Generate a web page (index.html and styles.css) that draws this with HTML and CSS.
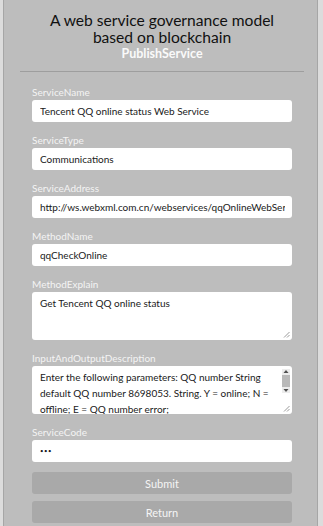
FILE: index.html
```html
<!DOCTYPE html>
<html>
<head>
<meta charset="utf-8">
<link rel="stylesheet" href="styles.css">
</head>
<body>
<div class="panel">
  <header class="head">
    <h1 class="title">A web service governance model<br>based on blockchain</h1>
    <div class="subtitle">PublishService</div>
  </header>
  <hr class="rule">
  <form class="form">
    <div class="field">
      <label class="label">ServiceName</label>
      <div class="input"><span class="val">Tencent QQ online status Web Service</span></div>
    </div>
    <div class="field">
      <label class="label">ServiceType</label>
      <div class="input"><span class="val">Communications</span></div>
    </div>
    <div class="field">
      <label class="label">ServiceAddress</label>
      <div class="input"><span class="val">http://ws.webxml.com.cn/webservices/qqOnlineWebService.asmx</span></div>
    </div>
    <div class="field">
      <label class="label">MethodName</label>
      <div class="input"><span class="val">qqCheckOnline</span></div>
    </div>
    <div class="field">
      <label class="label">MethodExplain</label>
      <div class="area">
        <div class="area-text">Get Tencent QQ online status</div>
        <div class="area-side">
          <svg class="grip" width="7" height="7" viewBox="0 0 7 7"><path d="M6.5 1 L1 6.5 M6.5 4 L4 6.5" stroke="#9a9a9a" stroke-width="1" fill="none"/></svg>
        </div>
      </div>
    </div>
    <div class="field">
      <label class="label">InputAndOutputDescription</label>
      <div class="area">
        <div class="area-text">Enter the following parameters: QQ number String default QQ number 8698053. String. Y = online; N = offline; E = QQ number error;</div>
        <div class="area-side scroll">
          <div class="sb">
            <svg class="arrow" width="8" height="5" viewBox="0 0 8 5"><path d="M4 1 L6.5 4 L1.5 4 Z" fill="#505050"/></svg>
            <span class="thumb"></span>
            <svg class="arrow" width="8" height="5" viewBox="0 0 8 5"><path d="M4 4 L6.5 1 L1.5 1 Z" fill="#505050"/></svg>
          </div>
          <svg class="grip" width="7" height="7" viewBox="0 0 7 7"><path d="M6.5 1 L1 6.5 M6.5 4 L4 6.5" stroke="#9a9a9a" stroke-width="1" fill="none"/></svg>
        </div>
      </div>
    </div>
    <div class="field last">
      <label class="label">ServiceCode</label>
      <div class="input dots"><span class="val">&#8226;&#8226;&#8226;</span></div>
    </div>
    <div class="buttons">
      <button type="button" class="btn">Submit</button>
      <button type="button" class="btn">Return</button>
    </div>
  </form>
</div>
</body>
</html>
```
FILE: styles.css
```css
html, body {
  margin: 0;
  padding: 0;
  height: 100%;
}
body {
  background: #dcdcdc;
  font-family: Lato, "Noto Sans", sans-serif;
  padding: 0 5px 0 3px;
  box-sizing: border-box;
  overflow: hidden;
}
.panel {
  background: #bdbdbd;
  border-left: 1px solid #a6a6a6;
  border-right: 1px solid #a6a6a6;
  min-height: 100%;
  box-sizing: border-box;
  padding: 12px 13px 0 16px;
}
.head {
  text-align: center;
}
.title {
  margin: 0;
  font-size: 15.6px;
  line-height: 17px;
  font-weight: 400;
  color: #111;
}
.subtitle {
  margin-top: 0;
  font-size: 12.5px;
  line-height: 16px;
  font-weight: 700;
  color: #fafafa;
}
.rule {
  margin: 9px 0 0 0;
  border: 0;
  border-top: 1px solid #9e9e9e;
  height: 0;
}
.form {
  padding: 13px 12px 0 12px;
  display: flex;
  flex-direction: column;
}
.field {
  display: flex;
  flex-direction: column;
  margin-bottom: 11px;
}
.field.last {
  margin-bottom: 10px;
}
.label {
  font-size: 10px;
  line-height: 14px;
  color: #f4f4f4;
  margin-bottom: 1px;
}
.input {
  background: #fff;
  border-radius: 3px;
  height: 22px;
  line-height: 22px;
  padding: 0 7px 0 8px;
  font-size: 10px;
  color: #1a1a1a;
}
.val {
  display: block;
  white-space: nowrap;
  overflow: hidden;
}
.dots {
  font-size: 6px;
  letter-spacing: 0.5px;
}
.area {
  background: #fff;
  border-radius: 3px;
  height: 48px;
  display: flex;
  overflow: hidden;
}
.area-text {
  flex: 1;
  padding: 3px 0 0 8px;
  font-size: 10px;
  line-height: 16px;
  color: #1a1a1a;
}
.area-side {
  width: 10px;
  display: flex;
  flex-direction: column;
  justify-content: flex-end;
  align-items: flex-end;
  padding: 0 2px 2px 0;
}
.scroll {
  justify-content: space-between;
  padding-top: 3px;
}
.sb {
  width: 8px;
  display: flex;
  flex-direction: column;
  align-items: center;
  background: #ececec;
}
.arrow {
  display: block;
}
.thumb {
  width: 8px;
  height: 12px;
  background: #b9b9b9;
  margin: 1px 0;
}
.grip {
  display: block;
}
.buttons {
  display: flex;
  flex-direction: column;
  gap: 7px;
}
.btn {
  height: 22px;
  border: 0;
  border-radius: 3px;
  background: #a9a9a9;
  color: #f5f5f5;
  font-family: inherit;
  font-size: 11px;
  padding: 0;
}
```
